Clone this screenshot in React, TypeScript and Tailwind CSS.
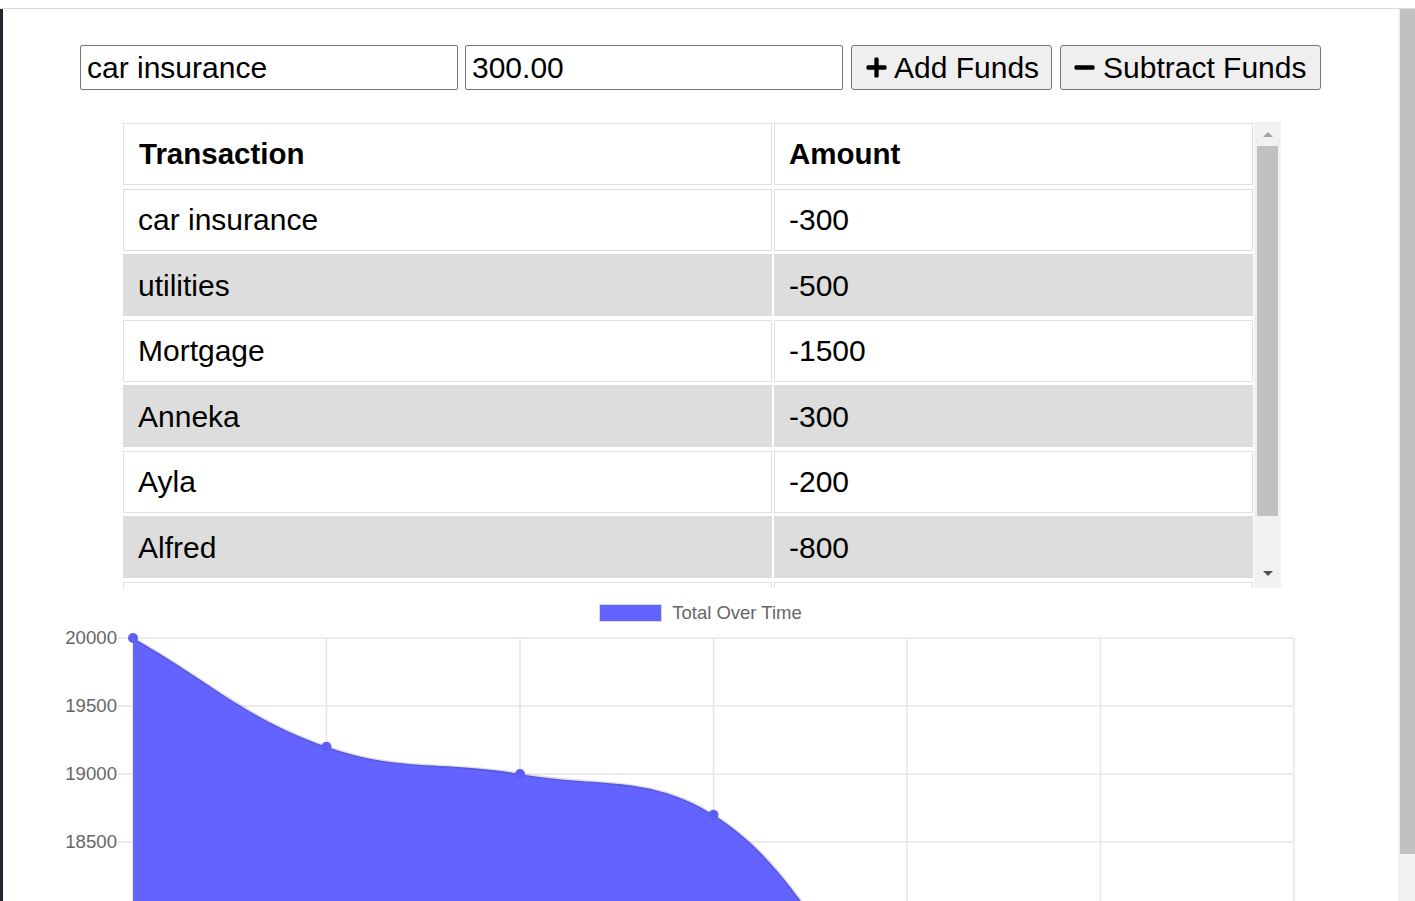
import { FaPlus, FaMinus } from "react-icons/fa";

const rows = [
  { name: "car insurance", amount: "-300" },
  { name: "utilities", amount: "-500" },
  { name: "Mortgage", amount: "-1500" },
  { name: "Anneka", amount: "-300" },
  { name: "Ayla", amount: "-200" },
  { name: "Alfred", amount: "-800" },
  { name: "", amount: "" },
];

const values = [20000, 19200, 19000, 18700, 17200, 16700, 16400];

type Pt = { x: number; y: number };

function buildCurve(pts: Pt[]) {
  // chart.js style spline, tension 0.4
  const t = 0.4;
  const ctrl = pts.map((p, i) => {
    const p0 = pts[i - 1] || p;
    const p2 = pts[i + 1] || p;
    const d01 = Math.hypot(p.x - p0.x, p.y - p0.y);
    const d12 = Math.hypot(p2.x - p.x, p2.y - p.y);
    const tot = d01 + d12 || 1;
    const fa = (t * d01) / tot;
    const fb = (t * d12) / tot;
    return {
      prev: { x: p.x - fa * (p2.x - p0.x), y: p.y - fa * (p2.y - p0.y) },
      next: { x: p.x + fb * (p2.x - p0.x), y: p.y + fb * (p2.y - p0.y) },
    };
  });
  let d = `M${pts[0].x},${pts[0].y}`;
  for (let i = 0; i < pts.length - 1; i++) {
    const a = ctrl[i].next;
    const b = ctrl[i + 1].prev;
    const p = pts[i + 1];
    d += ` C${a.x},${a.y} ${b.x},${b.y} ${p.x},${p.y}`;
  }
  return d;
}

function Chart() {
  const pts = values.map((v, i) => ({ x: 133 + i * 193.5, y: 638 + ((20000 - v) / 500) * 68 }));
  const line = buildCurve(pts);
  const area = `${line} L1294,1300 L133,1300 Z`;
  const xs = pts.map((p) => p.x);
  const ys = [638, 706, 774, 842, 910];
  const labels = ["20000", "19500", "19000", "18500"];
  return (
    <svg width="1395" height="276" viewBox="3 625 1395 276" className="block">
      {ys.map((y) => (
        <line key={y} x1="118" x2="1294" y1={y} y2={y} stroke="#e6e6e6" strokeWidth="1.5" />
      ))}
      {xs.map((x) => (
        <line key={x} x1={x} x2={x} y1="638" y2="1300" stroke="#e6e6e6" strokeWidth="1.5" />
      ))}
      {labels.map((l, i) => (
        <text
          key={l}
          x="117"
          y={ys[i] + 6}
          textAnchor="end"
          fontSize="18.6"
          fill="#666"
          fontFamily="Liberation Sans, Arial, sans-serif"
        >
          {l}
        </text>
      ))}
      <path d={area} fill="#6363ff" />
      <path d={line} fill="none" stroke="rgba(0,0,0,0.12)" strokeWidth="3" />
      {pts.map((p) => (
        <circle key={p.x} cx={p.x} cy={p.y} r="5" fill="#5e5ef5" />
      ))}
    </svg>
  );
}

export default function App() {
  return (
    <div className="w-[1415px] h-[901px] overflow-hidden bg-white flex flex-col font-['Liberation_Sans',Arial,sans-serif] text-black">
      <div className="h-[9px] shrink-0 border-b border-[#dcdcdc]" />
      <div className="flex flex-1 min-h-0">
        <div className="w-[3px] bg-[#21272d]" />

        <div className="w-[1395px] flex flex-col">
          <div className="flex items-center pt-[36px] pl-[77px] h-[81px]">
            <input
              defaultValue="car insurance"
              className="w-[378px] h-[45px] border border-[#767676] rounded-[2px] px-[6px] text-[30px] outline-none"
            />
            <input
              defaultValue="300.00"
              className="ml-[7px] w-[378px] h-[45px] border border-[#767676] rounded-[2px] px-[6px] text-[30px] outline-none"
            />
            <button className="ml-[8px] h-[45px] w-[201px] flex items-center gap-[6px] pl-[13px] bg-[#efefef] border border-[#767676] rounded-[3px] text-[30px]">
              <FaPlus size={23} />
              <span>Add Funds</span>
            </button>
            <button className="ml-[8px] h-[45px] w-[261px] flex items-center gap-[7px] pl-[12px] bg-[#efefef] border border-[#767676] rounded-[3px] text-[30px]">
              <FaMinus size={23} />
              <span>Subtract Funds</span>
            </button>
          </div>

          <div className="mt-[32px] ml-[119px] flex h-[466px] w-[1159px]">
            <div className="w-[1132px] overflow-hidden pt-[1px] pl-[1px] flex flex-col gap-[3px]">
              <div className="flex gap-[2px] shrink-0">
                <div className="w-[649px] h-[62px] border border-[#e0e0e0] flex items-center pl-[15px] text-[29.5px] font-bold">
                  Transaction
                </div>
                <div className="w-[479px] h-[62px] border border-[#e0e0e0] flex items-center pl-[14px] text-[29.5px] font-bold">
                  Amount
                </div>
              </div>
              {rows.map((r, i) => (
                <div key={i} className="flex gap-[2px] shrink-0 mt-[0.5px]">
                  <div
                    className={
                      i % 2 === 1
                        ? "w-[649px] h-[62px] border border-[#dddddd] bg-[#dddddd] flex items-center pl-[14px] text-[30px]"
                        : "w-[649px] h-[62px] border border-[#e0e0e0] bg-white flex items-center pl-[14px] text-[30px]"
                    }
                  >
                    {r.name}
                  </div>
                  <div
                    className={
                      i % 2 === 1
                        ? "w-[479px] h-[62px] border border-[#dddddd] bg-[#dddddd] flex items-center pl-[14px] text-[30px]"
                        : "w-[479px] h-[62px] border border-[#e0e0e0] bg-white flex items-center pl-[14px] text-[30px]"
                    }
                  >
                    {r.amount}
                  </div>
                </div>
              ))}
            </div>
            <div className="w-[27px] bg-[#f1f1f1] flex flex-col">
              <div className="h-[24px] flex items-center justify-center">
                <div className="w-0 h-0 border-l-[5px] border-r-[5px] border-b-[5px] border-l-transparent border-r-transparent border-b-[#a3a3a3]" />
              </div>
              <div className="ml-[3px] w-[21px] h-[370px] bg-[#c1c1c1]" />
              <div className="flex-1 flex items-end justify-center pb-[12px]">
                <div className="w-0 h-0 border-l-[5px] border-r-[5px] border-t-[5px] border-l-transparent border-r-transparent border-t-[#505050]" />
              </div>
            </div>
          </div>

          <div className="h-[37px] flex justify-center items-start pt-[16px] gap-[10px]">
            <div className="w-[63px] h-[18px] bg-[#6363ff] border border-[#d6d6f5]" />
            <span className="text-[18.5px] leading-[18px] text-[#666]">Total Over Time</span>
          </div>
          <Chart />
        </div>

        <div className="w-[17px] bg-[#f1f1f1] flex">
          <div className="ml-[2px] w-[15px] h-[845px] bg-[#c1c1c1]" />
        </div>
      </div>
    </div>
  );
}
